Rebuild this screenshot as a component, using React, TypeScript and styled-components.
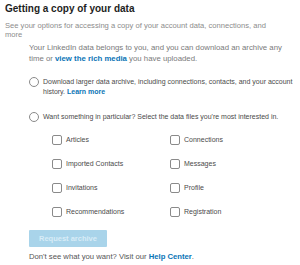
import React from 'react';
import styled, { createGlobalStyle } from 'styled-components';

const GlobalStyle = createGlobalStyle`
  body {
    margin: 0;
    background: #fff;
    font-family: "Liberation Sans", Arial, sans-serif;
  }
`;

const Page = styled.div`
  width: 300px;
  height: 265px;
  padding: 3px 0 0 5px;
  box-sizing: border-box;
  overflow: hidden;
`;

const Title = styled.h1`
  margin: 0;
  font-size: 10px;
  line-height: 12px;
  font-weight: 700;
  color: #1d1d1d;
`;

const Subtitle = styled.p`
  margin: 6px 0 0;
  font-size: 7.6px;
  line-height: 9px;
  color: #8c8c8c;
  width: 277px;
`;

const Body = styled.div`
  padding-left: 24px;
  margin-top: 3px;
  display: flex;
  flex-direction: column;
`;

const Intro = styled.p`
  margin: 0;
  font-size: 7.8px;
  line-height: 11px;
  color: #7a7a7a;
  width: 266px;
`;

const Link = styled.a`
  color: #0a74b6;
  font-weight: 700;
  text-decoration: none;
`;

const Option = styled.label<{ $top: number }>`
  display: flex;
  align-items: flex-start;
  gap: 4px;
  margin-top: ${p => p.$top}px;
  font-size: 7px;
  line-height: 10px;
  color: #4a4a4a;
`;

const Radio = styled.span`
  flex: none;
  width: 10px;
  height: 10px;
  border: 1px solid #8a8a8a;
  border-radius: 50%;
  box-sizing: border-box;
`;

const OptionText = styled.span`
  width: 254px;
`;

const Grid = styled.div`
  display: grid;
  grid-template-columns: 118px 118px;
  row-gap: 13px;
  padding-left: 23px;
  margin-top: 12px;
`;

const Check = styled.label`
  display: flex;
  align-items: center;
  gap: 4px;
  font-size: 7px;
  line-height: 11px;
  color: #4a4a4a;
`;

const Box = styled.span`
  flex: none;
  width: 10px;
  height: 10px;
  border: 1px solid #8a8a8a;
  border-radius: 2px;
  box-sizing: border-box;
`;

const Button = styled.button`
  align-self: flex-start;
  margin-top: 13px;
  width: 78px;
  height: 17px;
  padding: 0;
  border: none;
  border-radius: 1px;
  background: #a9d4ea;
  color: #d8ecf7;
  font-family: inherit;
  font-size: 7.5px;
  font-weight: 700;
`;

const Footer = styled.p`
  margin: 5px 0 0;
  font-size: 7.7px;
  line-height: 10px;
  color: #555;
`;

const files = [
  'Articles',
  'Connections',
  'Imported Contacts',
  'Messages',
  'Invitations',
  'Profile',
  'Recommendations',
  'Registration',
];

export default function App() {
  return (
    <Page>
      <GlobalStyle />
      <Title>Getting a copy of your data</Title>
      <Subtitle>
        See your options for accessing a copy of your account data, connections, and more
      </Subtitle>
      <Body>
        <Intro>
          Your LinkedIn data belongs to you, and you can download an archive any time or{' '}
          <Link href="#">view the rich media</Link> you have uploaded.
        </Intro>
        <Option $top={13}>
          <Radio />
          <OptionText>
            Download larger data archive, including connections, contacts, and your account
            history. <Link href="#">Learn more</Link>
          </OptionText>
        </Option>
        <Option $top={15}>
          <Radio />
          <OptionText>
            Want something in particular? Select the data files you're most interested in.
          </OptionText>
        </Option>
        <Grid>
          {files.map(f => (
            <Check key={f}>
              <Box />
              {f}
            </Check>
          ))}
        </Grid>
        <Button disabled>Request archive</Button>
        <Footer>
          Don't see what you want? Visit our <Link href="#">Help Center</Link>.
        </Footer>
      </Body>
    </Page>
  );
}
